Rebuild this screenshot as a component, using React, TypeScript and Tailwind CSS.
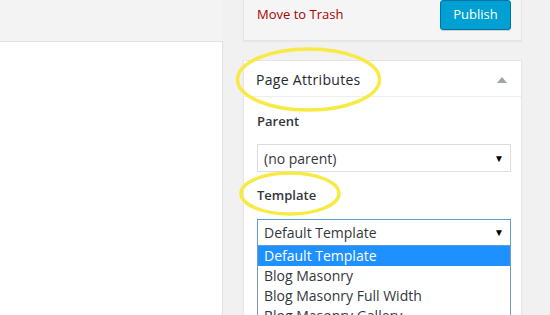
import React from "react";

export default function App() {
  return (
    <div className="relative w-[550px] h-[315px] overflow-hidden bg-[#f1f1f1] flex font-['Open_Sans',sans-serif] text-[#23282d]">
      {/* left editor area */}
      <div className="w-[223px] shrink-0 flex flex-col">
        <div className="h-[41px] shrink-0 bg-[#f3f3f3]" />
        <div className="flex-1 bg-white border-t border-r border-[#e1e1e1]" />
      </div>

      {/* sidebar */}
      <div className="ml-[20px] w-[279px] shrink-0 flex flex-col">
        {/* publish box bottom */}
        <div className="h-[41px] shrink-0 bg-[#f5f5f5] border-x border-b border-[#e5e5e5] shadow-[0_1px_1px_rgba(0,0,0,0.04)] flex items-start justify-between pl-[13px] pr-[10px]">
          <div className="h-[30px] flex items-center text-[13px] text-[#a00]">Move to Trash</div>
          <button className="h-[30px] w-[71px] rounded-[3px] bg-[#00a0d2] border border-[#0073aa] text-white text-[13px] shadow-[0_1px_0_rgba(0,0,0,0.15)] flex items-center justify-center">
            Publish
          </button>
        </div>

        {/* page attributes box */}
        <div className="mt-[19px] shrink-0 h-[300px] bg-white border border-[#e5e5e5] shadow-[0_1px_1px_rgba(0,0,0,0.04)] flex flex-col">
          <div className="h-[36px] shrink-0 border-b border-[#eee] flex items-center justify-between pl-[12px] pr-[14px]">
            <span className="text-[14px] tracking-[0.3px] text-[#23282d] mt-[2px]">Page Attributes</span>
            <svg width="10" height="6" viewBox="0 0 10 6" className="mt-[2px]">
              <polygon points="5,0 10,6 0,6" fill="#a0a5aa" />
            </svg>
          </div>
          <div className="px-[13px] flex flex-col">
            <div className="mt-[15px] text-[13px] font-semibold text-[#32373c] leading-[18px]">Parent</div>
            <div className="mt-[14px] h-[28px] w-[254px] shrink-0 border border-[#ddd] bg-white flex items-center justify-between pl-[6px] pr-[6px] text-[14px] text-[#32373c]">
              <span>(no parent)</span>
              <span className="text-[10px] text-black">▼</span>
            </div>
            <div className="mt-[14px] text-[13px] font-semibold text-[#32373c] leading-[18px]">Template</div>
            <div className="mt-[15px] h-[27px] w-[254px] shrink-0 border border-[#5b9dd9] bg-white flex items-center justify-between pl-[6px] pr-[6px] text-[14px] text-[#32373c]">
              <span>Default Template</span>
              <span className="text-[10px] text-black">▼</span>
            </div>
            <div className="w-[254px] shrink-0 border-x border-[#7a9cc2] bg-white text-[14px] text-[#32373c] leading-[20px]">
              <div className="h-[20px] bg-[#1e90ff] text-white pl-[6px]">Default Template</div>
              <div className="h-[20px] pl-[6px]">Blog Masonry</div>
              <div className="h-[20px] pl-[6px]">Blog Masonry Full Width</div>
              <div className="h-[20px] pl-[6px]">Blog Masonry Gallery</div>
            </div>
          </div>
        </div>
      </div>

      {/* highlight annotations */}
      <svg className="absolute inset-0 pointer-events-none" width="550" height="315">
        <ellipse cx="308.5" cy="79.5" rx="71" ry="30.5" fill="none" stroke="#f7ea45" strokeWidth="3.5" />
        <ellipse cx="290" cy="193.5" rx="49" ry="20.5" fill="none" stroke="#f7ea45" strokeWidth="3.5" />
      </svg>
    </div>
  );
}
